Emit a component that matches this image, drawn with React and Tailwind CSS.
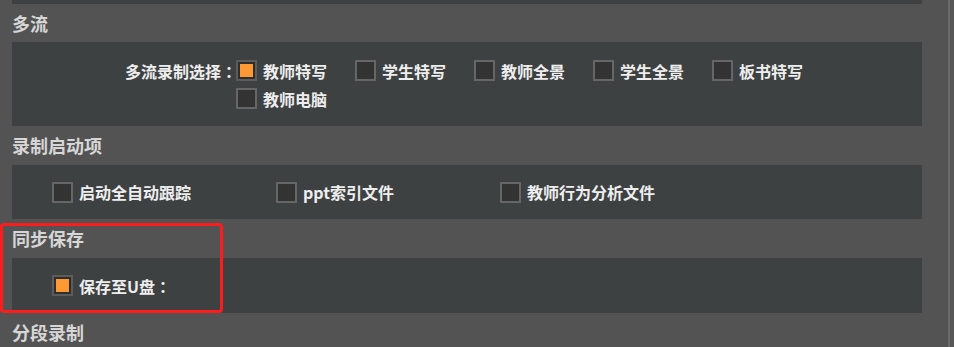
import React from 'react';

const font = { fontFamily: '"Noto Sans CJK SC", "Noto Sans", sans-serif' };

function Colon() {
  return <span style={{ fontFamily: '"Noto Sans CJK TC", sans-serif' }}>：</span>;
}

function Box({ checked }) {
  if (checked) {
    return (
      <span className="w-[21px] h-[21px] shrink-0 border-2 border-[#5c5c5c] bg-[#2e2e2e] p-[2px] flex">
        <span className="flex-1 bg-[#ff9933]" />
      </span>
    );
  }
  return <span className="w-[21px] h-[21px] shrink-0 border-2 border-[#666666] bg-[#333333]" />;
}

function Option({ label, checked, className = '' }) {
  return (
    <div className={`flex items-center gap-[6px] h-[21px] ${className}`}>
      <Box checked={checked} />
      <span className="text-[16px] font-bold text-[#eeeeee] leading-none whitespace-nowrap">{label}</span>
    </div>
  );
}

function Header({ children, h = 'h-[39px]' }) {
  return (
    <div className={`${h} flex items-center text-[18px] font-bold text-[#d6d6d6]`}>{children}</div>
  );
}

export default function App() {
  const streams = [
    ['教师特写', true],
    ['学生特写', false],
    ['教师全景', false],
    ['学生全景', false],
    ['板书特写', false],
    ['教师电脑', false],
  ];

  return (
    <div className="w-[954px] h-[347px] overflow-hidden bg-[#535353] flex" style={font}>
      <div className="flex-1 pl-[12px] pr-[26px]">
        <div className="h-[4px] bg-[#3e4142]" />
        <Header h="h-[38px]">多流</Header>
        <div className="h-[84px] bg-[#3e4142] pt-[18px] pl-[113px] flex items-start">
          <span className="w-[111px] h-[21px] flex items-center text-[16px] font-bold text-[#eeeeee] leading-none whitespace-nowrap">
            多流录制选择<Colon />
          </span>
          <div className="w-[600px] flex flex-wrap gap-y-[7px]">
            {streams.map(([label, checked]) => (
              <Option key={label} label={label} checked={checked} className="w-[119px]" />
            ))}
          </div>
        </div>

        <Header>录制启动项</Header>
        <div className="h-[54px] bg-[#3e4142] pl-[40px] flex items-center">
          <Option label="启动全自动跟踪" className="w-[224px]" />
          <Option label="ppt索引文件" className="w-[224px]" />
          <Option label="教师行为分析文件" />
        </div>

        <div className="relative">
          <Header>同步保存</Header>
          <div className="h-[55px] bg-[#3e4142] pl-[40px] flex items-center">
            <Option label={<>保存至U盘<Colon /></>} checked />
          </div>
          <div className="absolute left-[-12px] top-[4px] w-[223px] h-[90px] border-[3px] border-[#ff1c1c] rounded-[4px]" />
        </div>

        <Header>分段录制</Header>
      </div>
      <div className="w-[6px] border-l-2 border-[#6b6b6b] bg-[#575757]" />
    </div>
  );
}
